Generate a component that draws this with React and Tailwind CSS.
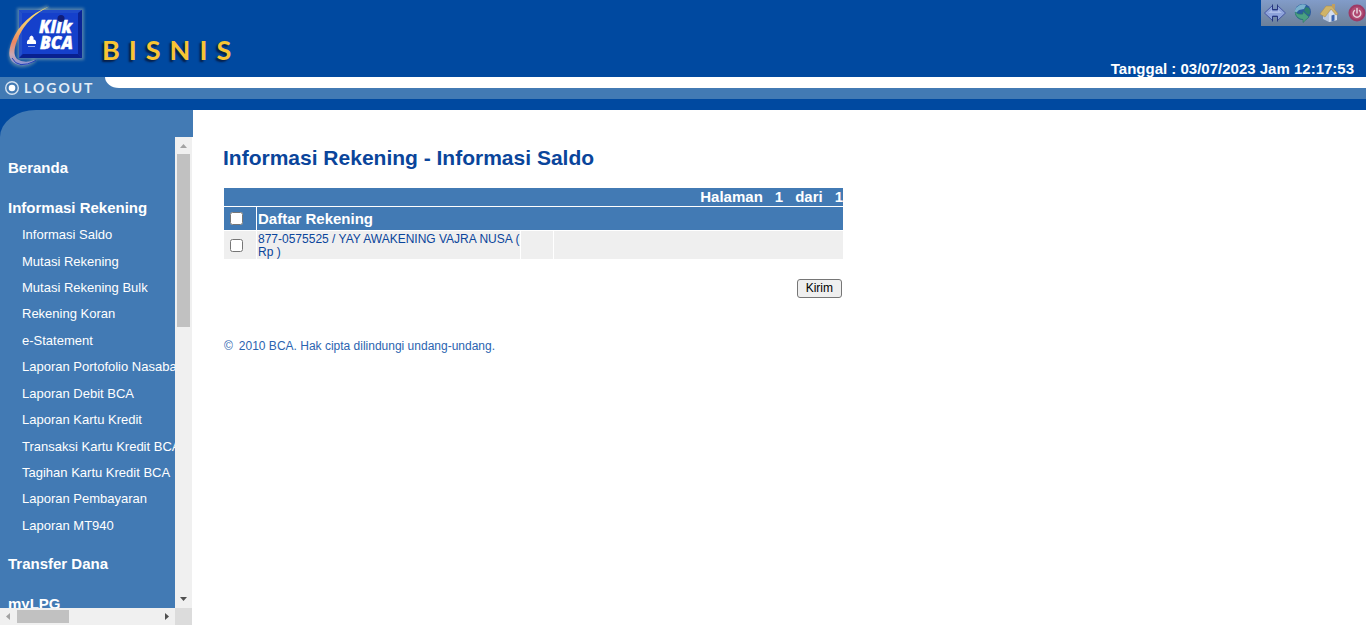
const menu = [
  { title: "Beranda", items: [] },
  {
    title: "Informasi Rekening",
    items: [
      "Informasi Saldo",
      "Mutasi Rekening",
      "Mutasi Rekening Bulk",
      "Rekening Koran",
      "e-Statement",
      "Laporan Portofolio Nasabah",
      "Laporan Debit BCA",
      "Laporan Kartu Kredit",
      "Transaksi Kartu Kredit BCA",
      "Tagihan Kartu Kredit BCA",
      "Laporan Pembayaran",
      "Laporan MT940",
    ],
  },
  { title: "Transfer Dana", items: [] },
  { title: "myLPG", items: [] },
];

function Logo() {
  return (
    <svg width="90" height="77" viewBox="0 0 90 77" role="img" aria-label="KlikBCA">
      <defs>
        <filter id="glow" x="-20%" y="-20%" width="140%" height="140%">
          <feGaussianBlur stdDeviation="1.8" />
        </filter>
        <linearGradient id="swoosh" x1="0" y1="0" x2="0" y2="1">
          <stop offset="0" stopColor="#fbe36a" />
          <stop offset="0.3" stopColor="#f3c56a" />
          <stop offset="0.6" stopColor="#ee8660" />
          <stop offset="0.82" stopColor="#c9a8b4" />
          <stop offset="1" stopColor="#8090d8" />
        </linearGradient>
      </defs>
      <rect x="17" y="8" width="67" height="52" fill="#7f9fb0" opacity="0.65" filter="url(#glow)" />
      <path d="M48 7Q22 20 13 45Q6 63 20 65Q28 66 35 60" fill="none" stroke="#a9b9a8" strokeWidth="4" opacity="0.5" filter="url(#glow)" />
      <rect x="19" y="10" width="63" height="48" fill="#1238bd" />
      <path d="M19 10H82L79 13H22Z" fill="#1f4cca" />
      <path d="M82 10V58L78 54V13Z" fill="#0a2496" />
      <path d="M19 58H82L78 54H23Z" fill="#08208f" />
      <path d="M19 10L22 13V54L19 58Z" fill="#2450ca" />
      <rect x="22" y="13" width="56" height="41" fill="#1540cb" />
      <g fill="#fff" stroke="#fff" strokeWidth="0.400" fontFamily="Open Sans, Liberation Sans, sans-serif" fontWeight="800" fontStyle="italic" fontSize="17">
        <text x="39" y="33">Klik</text>
        <text x="40" y="49">BCA</text>
      </g>
      <circle cx="61" cy="18.500" r="3.500" fill="#101d77" />
      <path d="M31.500 35.500C33.500 36 34 38 33.500 39.500C35.500 39.500 36.500 41.500 36 44H27C26.500 41.500 27.500 39.500 29.500 39.500C29 38 29.500 36 31.500 35.500Z" fill="#fff" />
      <path d="M28 46.500H35" stroke="#8fa6ec" />
      <path d="M49 6.500Q22 17 12 41Q5 59 16 64Q27 68 35 60Q24 64 17 59Q11 53 19 36Q28 17 49 6.500Z" fill="url(#swoosh)" />
      <path d="M12 58Q18 70 36 60.500" fill="none" stroke="#2040b8" strokeWidth="1" />
    </svg>
  );
}

function ResizeIcon() {
  return (
    <svg width="24" height="20" viewBox="0 0 24 20" aria-hidden="true">
      <path d="M1.500 10L9.500 2.500V7H14.500V2.500L22.500 10L14.500 17.500V13H9.500V17.500Z" fill="#8ea3db" stroke="#4656a0" strokeLinejoin="round" />
      <path d="M5 10L9 6.500V8.500H15V6.500L19 10" fill="#adbdea" />
      <path d="M9.500 1.500V6.500H14.500V1.500M9.500 18.500V13.500H14.500V18.500" fill="none" stroke="#27377f" />
    </svg>
  );
}

function GlobeIcon() {
  return (
    <svg width="20" height="20" viewBox="0 0 20 20" aria-hidden="true">
      <circle cx="10" cy="9" r="8" fill="#2a5c9f" />
      <path d="M4 4Q8 0 13 2L11 6L6 7L2 11Q1 7 4 4Z" fill="#79b1cd" />
      <path d="M13 4L16 5Q18 9 16 12L13 10L11 7Z" fill="#2c806f" />
      <path d="M2 9Q5 12 10 11V8.500L16 14L10 19.500V16.500Q3 16 2 9Z" fill="#4aa082" stroke="#2c7a64" strokeWidth="0.600" />
    </svg>
  );
}

function HomeIcon() {
  return (
    <svg width="20" height="20" viewBox="0 0 20 20" aria-hidden="true">
      <path d="M4 9L12 5L18 11V17L10 19L4 16Z" fill="#b9c8e0" />
      <path d="M10 10L13 6L18 12V17L10 19Z" fill="#d4deef" />
      <path d="M12.500 12.500L15.500 11.500V17.500L12.500 18.500Z" fill="#3d66b0" />
      <path d="M1 11L7 3L13 3L19 11L17 12L12 6L6 14Z" fill="#d0b468" stroke="#a6854a" strokeWidth="0.500" />
      <path d="M13 1H16V6L13 4Z" fill="#bf9e61" />
    </svg>
  );
}

function PowerIcon() {
  return (
    <svg width="21" height="20" viewBox="-3 0 21 20" aria-hidden="true">
      <circle cx="9" cy="10" r="8.500" fill="#9d3a66" />
      <circle cx="9" cy="10" r="6.500" fill="#b04a72" />
      <path d="M6.500 7.500A3.800 3.800 0 1 0 11.500 7.500M9 5.500V10" fill="none" stroke="#e6cfdb" strokeWidth="1.500" strokeLinecap="round" />
    </svg>
  );
}

function Arrow({ d, color }) {
  return (
    <svg width="17" height="17" viewBox="0 0 17 17" aria-hidden="true">
      <path d={d} fill={color} />
    </svg>
  );
}

function Header() {
  return (
    <header className="shrink-0 bg-[#0049a0]">
      <div className="flex h-[77px] justify-between">
        <div className="flex">
          <Logo />
          <p className="pt-[35px] pl-3 font-[Lato,sans-serif] text-[27px] leading-[30px] font-bold tracking-[9px] text-[#f8c533] [text-shadow:-2px_2px_2px_#071d45]">
            BISNIS
          </p>
        </div>
        <div className="flex flex-col items-end justify-between">
          <div className="flex h-[26px] items-center gap-[6px] bg-linear-to-b from-[#829cc9] to-[#6c8099] pl-[2px]">
            <a href="#resize" aria-label="Ubah ukuran"><ResizeIcon /></a>
            <a href="#language" aria-label="Bahasa"><GlobeIcon /></a>
            <a href="#home" aria-label="Beranda"><HomeIcon /></a>
            <a href="#exit" aria-label="Keluar"><PowerIcon /></a>
          </div>
          <p className="pr-3 text-[15px] leading-4 font-bold text-white">Tanggal : 03/07/2023 Jam 12:17:53</p>
        </div>
      </div>
      <div className="flex h-[22px] bg-[#427ab4]">
        <a href="#logout" className="flex w-[105px] items-center gap-1 pl-1 font-[Lato,sans-serif] text-sm leading-5 font-bold tracking-[2px] text-[#e3edf7]">
          <svg width="16" height="16" viewBox="0 0 16 16" aria-hidden="true">
            <circle cx="8" cy="8" r="6.300" fill="none" stroke="#d5e2f0" strokeWidth="1.400" />
            <circle cx="8" cy="8" r="3.300" fill="#fff" />
          </svg>
          LOGOUT
        </a>
        <div className="h-[11px] flex-1 rounded-bl-[14px_11px] bg-white" />
      </div>
      <div className="h-[11px]" />
    </header>
  );
}

function Sidebar() {
  return (
    <aside className="flex w-[193px] shrink-0 flex-col">
      <div className="h-[27px] shrink-0 bg-[#0049a0]">
        <div className="h-full rounded-tl-[36px_27px] bg-[#427ab4]" />
      </div>
      <div className="flex min-h-0 flex-1">
        <nav className="min-w-0 flex-1 overflow-hidden bg-[#427ab4] pt-[21px] whitespace-nowrap text-white">
          <ul className="flex flex-col gap-5 pl-2">
            {menu.map(({ title, items }) => (
              <li key={title}>
                <a href="#menu" className="block text-[15px] leading-5 font-bold">{title}</a>
                {items.length > 0 && (
                  <ul className="-mb-[5px] grid h-[321px] auto-rows-fr items-center pt-1 pl-[14px] text-[13px] leading-4">
                    {items.map((item) => (
                      <li key={item}><a href="#menu">{item}</a></li>
                    ))}
                  </ul>
                )}
              </li>
            ))}
          </ul>
        </nav>
        <div className="mr-px flex w-[17px] flex-col items-center justify-between bg-[#f0f0f0]">
          <div>
            <Arrow d="M5 11L8.500 7L12 11Z" color="#a3a3a3" />
            <div className="mx-auto h-[173px] w-[13px] bg-[#c1c1c1]" />
          </div>
          <Arrow d="M5 6L8.500 10L12 6Z" color="#505050" />
        </div>
      </div>
      <div className="mr-px flex h-[17px] shrink-0 bg-[#dcdcdc]">
        <div className="flex flex-1 items-center justify-between bg-[#f0f0f0]">
          <div className="flex items-center">
            <Arrow d="M10 5L6 8.500L10 12Z" color="#a3a3a3" />
            <div className="h-[13px] w-[52px] bg-[#c1c1c1]" />
          </div>
          <Arrow d="M7 5L11 8.500L7 12Z" color="#505050" />
        </div>
        <div className="w-[17px]" />
      </div>
    </aside>
  );
}

function Accounts() {
  return (
    <form className="mt-[17px] w-[621px] max-w-full" onSubmit={(e) => e.preventDefault()}>
      <table className="w-full table-fixed border-separate border-spacing-px">
        <colgroup>
          <col className="w-8" />
          <col className="w-[263px]" />
          <col className="w-8" />
          <col />
        </colgroup>
        <thead className="bg-[#427ab4] text-[15px] font-bold text-white">
          <tr>
            <td colSpan={4} className="h-[18px] p-0 text-right leading-[18px]">
              <span className="flex justify-end gap-3">
                <span>Halaman</span>
                <span>1</span>
                <span>dari</span>
                <span>1</span>
              </span>
            </td>
          </tr>
          <tr>
            <td className="h-[23px] p-0 pl-[6px]">
              <input type="checkbox" aria-label="Pilih semua rekening" className="block size-[13px]" />
            </td>
            <th colSpan={3} className="p-0 pl-px text-left leading-[23px]">Daftar Rekening</th>
          </tr>
        </thead>
        <tbody className="bg-[#efefef] text-xs text-[#0a459b]">
          <tr>
            <td className="h-7 p-0 pl-[6px]">
              <input id="account" type="checkbox" className="block size-[13px]" />
            </td>
            <td className="p-0 pt-px pl-px leading-[13px] whitespace-nowrap">
              <label htmlFor="account">
                877-0575525 / YAY AWAKENING VAJRA NUSA (
                <br />
                Rp )
              </label>
            </td>
            <td />
            <td />
          </tr>
        </tbody>
      </table>
      <div className="flex justify-end pt-[19px] pr-[2px]">
        <button type="submit" className="h-[19px] rounded-[3px] border border-[#767676] bg-[#efefef] px-2 text-xs leading-[17px] text-black">
          Kirim
        </button>
      </div>
    </form>
  );
}

export default function App() {
  return (
    <div className="flex h-screen flex-col overflow-hidden bg-white font-['Liberation_Sans',Arial,sans-serif]">
      <Header />
      <div className="flex min-h-0 flex-1">
        <Sidebar />
        <main className="min-w-0 flex-1 overflow-auto pt-9 pl-[30px]">
          <h1 className="text-[21px] leading-6 font-bold text-[#0a459b]">Informasi Rekening - Informasi Saldo</h1>
          <Accounts />
          <footer className="flex gap-[6px] pt-10 pl-px text-xs leading-4 text-[#2b64b0]">
            <span>©</span>
            <span>2010 BCA. Hak cipta dilindungi undang-undang.</span>
          </footer>
        </main>
      </div>
    </div>
  );
}
